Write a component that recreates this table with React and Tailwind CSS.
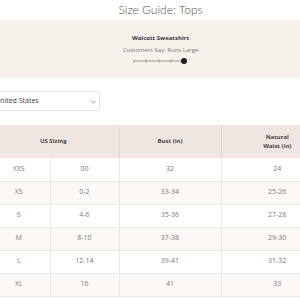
import React from "react";

const rows = [
  ["XXS", "00", "32", "24"],
  ["XS", "0-2", "33-34", "25-26"],
  ["S", "4-6", "35-36", "27-28"],
  ["M", "8-10", "37-38", "29-30"],
  ["L", "12-14", "39-41", "31-32"],
  ["XL", "16", "41", "33"],
];

function FitSlider() {
  // little scale with ticks, dot sits at "runs large"
  return (
    <svg width="56" height="8" viewBox="0 0 56 8" className="block">
      <line x1="1" y1="4" x2="52" y2="4" stroke="#8a8580" strokeWidth="0.8" />
      {[1, 13, 26, 38].map((x) => (
        <line key={x} x1={x} y1="2.5" x2={x} y2="5.5" stroke="#8a8580" strokeWidth="0.8" />
      ))}
      <circle cx="51" cy="4" r="3" fill="#1c1c1c" />
    </svg>
  );
}

export default function App() {
  return (
    <div className="w-[300px] h-[300px] overflow-hidden bg-white font-['Open_Sans',sans-serif]">
      <div className="w-[345px] ml-[-12px]">
        <h1 className="h-[20px] pt-[1px] text-center text-[12px] leading-[17px] font-light text-[#555] font-['Lato',sans-serif]">
          Size Guide: Tops
        </h1>

        <div className="h-[58px] bg-[#f7f1ec] flex flex-col items-center pt-[14px]">
          <div className="text-[6px] leading-[8px] font-bold text-[#3a3a3a]">Walcott Sweatshirt</div>
          <div className="mt-[4px] text-[6px] leading-[8px] text-[#777]">Customers Say: Runs Large</div>
          <div className="mt-[3px] ml-[1px]">
            <FitSlider />
          </div>
        </div>

        <div className="pt-[13px] h-[47px]">
          <div className="relative w-[112px] h-[20px] rounded-[3px] border border-[#e6e2df] bg-white flex items-center pl-[6px] text-[7px] text-[#444]">
            United States
            <svg width="5" height="4" viewBox="0 0 5 4" className="absolute right-[3px] top-[8px]">
              <path d="M0.7 1 L2.5 2.8 L4.3 1" fill="none" stroke="#555" strokeWidth="0.7" />
            </svg>
          </div>
        </div>

        <table className="w-[345px] border-collapse table-fixed text-center">
          <colgroup>
            <col className="w-[62px]" />
            <col className="w-[69px]" />
            <col className="w-[102px]" />
            <col className="w-[112px]" />
          </colgroup>
          <thead>
            <tr className="h-[33px] bg-[#efe6e1] text-[6px] leading-[9px] font-bold text-[#444]">
              <th colSpan={2} className="border-r border-[#e0d7d2]">US Sizing</th>
              <th className="border-r border-[#e0d7d2]">Bust (in)</th>
              <th>
                Natural
                <br />
                Waist (in)
              </th>
            </tr>
          </thead>
          <tbody>
            {rows.map((r, i) => (
              <tr
                key={r[0]}
                className={
                  "h-[23px] text-[7px] text-[#7a7a7a] border-b border-[#ece8e5] " +
                  (i % 2 === 1 ? "bg-[#fcf8f6]" : "bg-white")
                }
              >
                <td className="border-r border-[#ece8e5]">{r[0]}</td>
                <td className="border-r border-[#ece8e5]">{r[1]}</td>
                <td className="border-r border-[#ece8e5]">{r[2]}</td>
                <td>{r[3]}</td>
              </tr>
            ))}
          </tbody>
        </table>
      </div>
    </div>
  );
}
